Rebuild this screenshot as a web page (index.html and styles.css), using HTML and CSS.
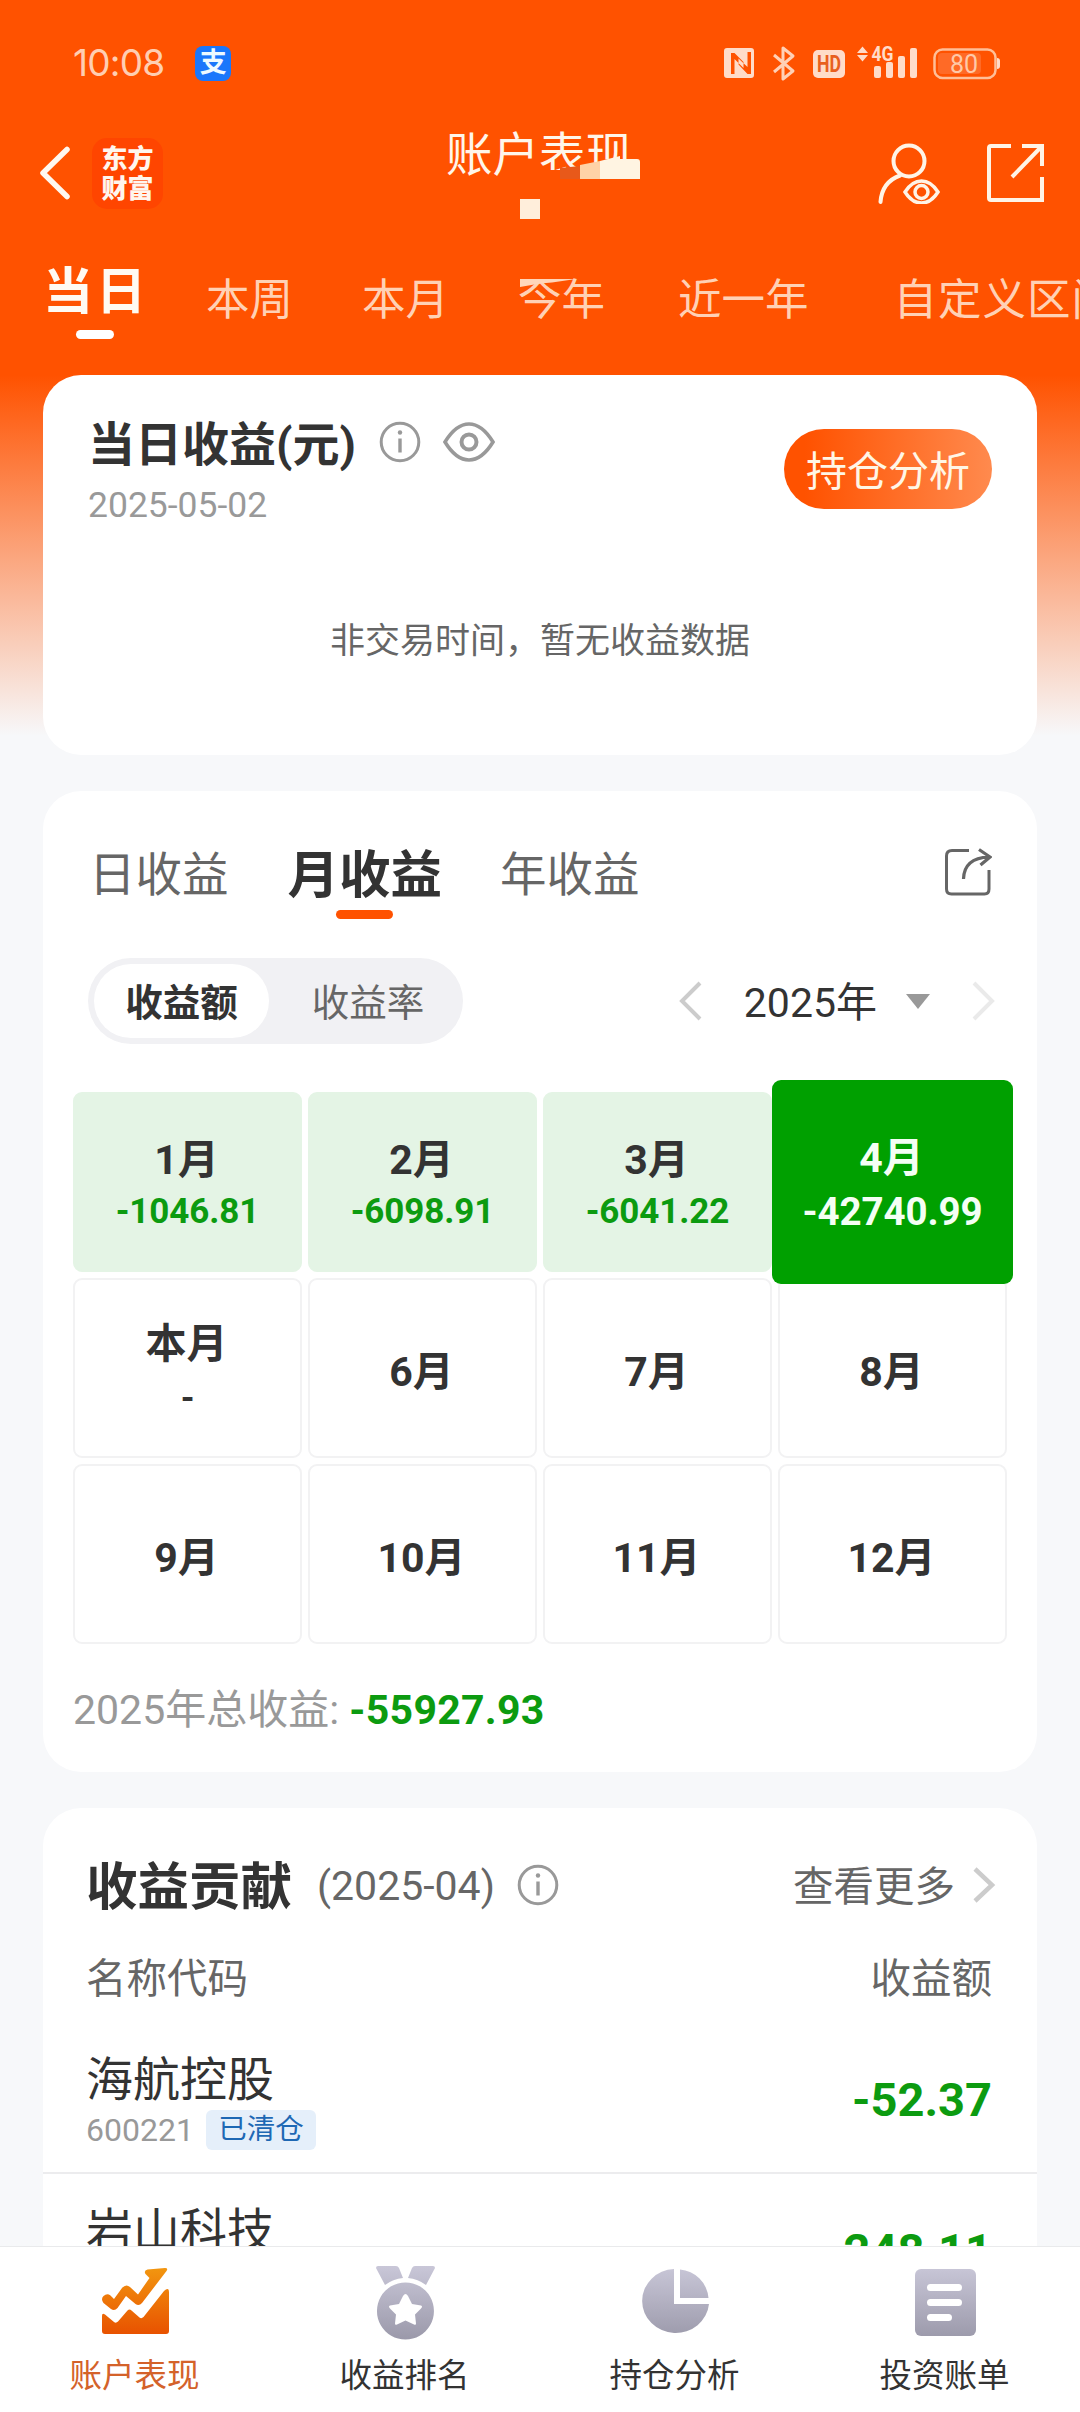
FILE: index.html
```html
<!DOCTYPE html>
<html lang="zh-CN">
<head>
<meta charset="utf-8">
<title>账户表现</title>
<link rel="stylesheet" href="styles.css">
</head>
<body>
<main class="page">
  <div class="status">
    <span class="time">10:08</span>
    <span class="alipay">支</span>
    <svg class="status-icons" width="284" height="40" viewBox="720 42 284 40">
      <g fill="#ffdcc9">
        <path fill-rule="evenodd" d="M727 47h24q3 0 3 3v24q0 3-3 3h-24q-3 0-3-3V50q0-3 3-3zM731 52v21h3.500V58l9 9v-6l-9-9zM747.500 51v15l-9-8.500v6l9 9.500h3.500V51z"/>
        <rect x="813" y="49" width="32" height="28" rx="5"/>
        <path d="M857 52l5.500-6.500L868 52zM857 54h11l-5.500 6.500z"/>
        <rect x="874" y="65" width="7" height="12" rx="2"/>
        <rect x="886" y="61" width="7" height="16" rx="2"/>
        <rect x="898" y="55" width="7" height="22" rx="2"/>
        <rect x="910" y="47" width="7" height="30" rx="2"/>
        <path d="M997 57q3 0 3 3v5q0 3-3 3z"/>
      </g>
      <path d="M774 54l19 16-10 8V47l10 8-19 16" fill="none" stroke="#ffd0b6" stroke-width="3" stroke-linejoin="round"/>
      <rect x="934.500" y="48.500" width="61" height="28.500" rx="8" fill="none" stroke="#ffbf98" stroke-width="2.500"/>
      <rect x="938" y="52" width="43" height="21" rx="4" fill="#ff6a26"/>
      <text x="829" y="71" class="hd" textLength="24" lengthAdjust="spacingAndGlyphs">HD</text>
      <text x="882.500" y="60" class="net" textLength="22" lengthAdjust="spacingAndGlyphs">4G</text>
      <text x="964" y="71.500" class="pct">80</text>
    </svg>
  </div>

  <header class="header">
    <div class="header-left">
      <svg width="30" height="54" viewBox="0 0 30 54"><path d="M27 3.500L3 27l24 23.500" fill="none" stroke="#fff8f0" stroke-width="5.500" stroke-linecap="round" stroke-linejoin="round"/></svg>
      <div class="logo"><span>东方</span><span>财富</span></div>
    </div>
    <h1 class="title">账户表现
      <svg class="pixels" width="200" height="70" viewBox="440 155 200 70">
        <path fill="#ff5200" d="M540 170h20v-2h80v17h-100z"/>
        <path fill="#e8591a" d="M560 168l20-2v13h-20z"/>
        <path fill="#ffd2a6" d="M580 165l20-4v18h-20z"/>
        <path fill="#fff4e2" d="M600 161l20-5v3h17q3 0 3 3v17h-40z"/>
        <path fill="#ffeedb" d="M520 199h20v20h-20z"/>
      </svg>
    </h1>
    <div class="header-right">
      <svg width="64" height="62" viewBox="877 141 64 62" fill="none" stroke="#fff4e6" stroke-width="4" stroke-linecap="round">
        <circle cx="909" cy="160" r="15.500"/>
        <path d="M900 174.500Q882 181 880.500 201"/>
        <path d="M905 191Q912 180 921.500 180T938 191Q931 202 921.500 202T905 191z" stroke-width="3.500"/>
        <circle cx="921.500" cy="191" r="6.500" stroke-width="3.500"/>
      </svg>
      <svg width="58" height="60" viewBox="986 143 58 60" fill="none" stroke="#fff4e6" stroke-width="4">
        <path d="M1011 146h-20q-2 0-2 2v50q0 2 2 2h51v-23"/>
        <path d="M1022 146h20v20M1042 146l-30 31"/>
      </svg>
    </div>
  </header>

  <nav class="ranges">
    <span class="range range-active">当日</span>
    <span class="range range-week">本周</span>
    <span class="range range-month">本月</span>
    <span class="range range-year">今年
      <svg class="notch" width="64" height="18" viewBox="518 269 64 18"><path fill="#ff5200" d="M518 269h44v10h-44z"/><path fill="#ffd6ba" d="M520 279h56l-24 3.500-12 1-20 3.500z"/></svg>
    </span>
    <span class="range range-recent">近一年</span>
    <span class="range range-custom">自定义区间</span>
  </nav>

  <section class="card today">
    <div class="today-head">
      <div>
        <div class="today-title">
          <h2>当日收益(元)</h2>
          <svg class="info" width="42" height="42" viewBox="0 0 42 42"><circle cx="21" cy="21" r="18.800" fill="none" stroke="#999" stroke-width="3"/><circle cx="21" cy="11.500" r="2.200" fill="#999"/><path d="M21 17.500v14" stroke="#999" stroke-width="3.400"/></svg>
          <svg class="eye" width="52" height="40" viewBox="0 0 52 40" fill="none" stroke="#999"><path d="M2 20Q13 2 26 2T50 20Q39 38 26 38T2 20z" stroke-width="3.600"/><circle cx="26" cy="20" r="7.500" stroke-width="4"/></svg>
        </div>
        <div class="today-date">2025-05-02</div>
      </div>
      <a class="analyse">持仓分析</a>
    </div>
    <p class="empty">非交易时间，暂无收益数据</p>
  </section>

  <section class="card calendar">
    <div class="cal-tabs">
      <span class="cal-tab">日收益</span>
      <span class="cal-tab cal-active">月收益</span>
      <span class="cal-tab">年收益</span>
      <svg class="share" width="48" height="48" viewBox="0 0 48 48" fill="none" stroke="#666" stroke-width="3"><path d="M25 2.500H8Q2.500 2.500 2.500 8v33q0 5 5 5h33q4.500 0 4.500-5V22"/><path d="M19.500 31Q20 10 45 9M35 1.500L46 9l-9.500 8" stroke-width="3.200"/></svg>
    </div>
    <div class="cal-tools">
      <div class="segment"><span class="seg seg-on">收益额</span><span class="seg">收益率</span></div>
      <div class="year">
        <svg width="24" height="40" viewBox="0 0 24 40"><path d="M22 2L4 20l18 18" fill="none" stroke="#ccc" stroke-width="4"/></svg>
        <span class="year-text">2025年</span>
        <svg class="drop" width="24" height="15" viewBox="0 0 24 15"><path d="M0 0h24L12 15z" fill="#999"/></svg>
        <svg width="24" height="40" viewBox="0 0 24 40"><path d="M2 2l18 18L2 38" fill="none" stroke="#eaeaea" stroke-width="4"/></svg>
      </div>
    </div>
    <div class="months">
      <div class="month loss"><b>1月</b><i>-1046.81</i></div>
      <div class="month loss"><b>2月</b><i>-6098.91</i></div>
      <div class="month loss"><b>3月</b><i>-6041.22</i></div>
      <div class="month selected"><b>4月</b><i>-42740.99</i></div>
      <div class="month now"><b>本月</b><i>-</i></div>
      <div class="month"><b>6月</b></div>
      <div class="month"><b>7月</b></div>
      <div class="month"><b>8月</b></div>
      <div class="month"><b>9月</b></div>
      <div class="month"><b>10月</b></div>
      <div class="month"><b>11月</b></div>
      <div class="month"><b>12月</b></div>
    </div>
    <p class="total">2025年总收益: <b>-55927.93</b></p>
  </section>

  <section class="card contrib">
    <div class="con-head">
      <h2>收益贡献</h2>
      <span class="con-date">(2025-04)</span>
      <svg class="con-info" width="42" height="42" viewBox="0 0 42 42"><circle cx="21" cy="21" r="18.800" fill="none" stroke="#999" stroke-width="3"/><circle cx="21" cy="11.500" r="2.200" fill="#999"/><path d="M21 17.500v14" stroke="#999" stroke-width="3.400"/></svg>
      <span class="more">查看更多</span>
      <svg class="con-info" width="24" height="36" viewBox="0 0 24 36"><path d="M3 2l17 16L3 34" fill="none" stroke="#ccc" stroke-width="4.500"/></svg>
    </div>
    <div class="con-cols"><span>名称代码</span><span>收益额</span></div>
    <div class="stock">
      <div><div class="name">海航控股</div><div class="code">600221<span class="chip">已清仓</span></div></div>
      <div class="amount">-52.37</div>
    </div>
    <div class="stock">
      <div><div class="name">岩山科技</div></div>
      <div class="amount">-248.11</div>
    </div>
  </section>
</main>

<nav class="bottom">
  <a class="item item-on">
    <svg width="80" height="80" viewBox="95 2260 80 80">
      <defs><linearGradient id="hot" gradientUnits="userSpaceOnUse" x1="0" y1="2268" x2="0" y2="2333"><stop offset="0" stop-color="#f2950f"/><stop offset="1" stop-color="#e85200"/></linearGradient>
      <linearGradient id="cool" gradientUnits="userSpaceOnUse" x1="0" y1="2265" x2="0" y2="2338"><stop offset="0" stop-color="#c9c7d8"/><stop offset="1" stop-color="#9b99aa"/></linearGradient></defs>
      <g fill="url(#hot)">
        <path d="M103.500 2302q-3-4 0-7 3.500-3 7-.500l3.500 3.500 8-11q4-4.500 8-1l8 7.500 11.500-16.500-4-4q-2-3.500 2-4.500l17.500-1.500q3.500 0 1.500 3l-24.500 32q-3 3.500-6.500 1l-9.500-8-8.500 12q-3 3.500-6.500 1z"/>
        <path d="M102 2315q0-3.500 3-1.500l9 7.500q2 1.500 4-.500l9.500-11q2-2 4 0l8 7q2 1.500 4-.500l20.500-26q5-4.500 5 1.500v38.500q0 3-3 3h-61q-3 0-3-3z"/>
      </g>
    </svg><span>账户表现</span></a>
  <a class="item">
    <svg width="80" height="80" viewBox="366 2260 80 80" fill="url(#cool)">
      <path d="M379 2265h18q2 0 3 2l4 10q-10 1-18 7l-9-17q0-2 2-2zM416 2265h18q2 0 2 2l-9 17q-8-6-18-7l4-10q1-2 3-2z"/>
      <path fill-rule="evenodd" d="M406.500 2281.500a28.500 28.500 0 1 1-.1 0zM404 2295l-4 8-9 1.500q-2 1 0 3l6 6-1 9q0 2 2 1l8.500-4 8.500 4q2 1 2-1l-1-9 6-6q2-2 0-3l-9-1.500-4-8q-2.500-4-5 0z"/>
    </svg><span>收益排名</span></a>
  <a class="item">
    <svg width="80" height="80" viewBox="635 2260 80 80" fill="url(#cool)">
      <path d="M674 2268v35h35a33.500 32 0 1 1-35-35zM680 2268.500a31 31 0 0 1 28.500 28.500H680z"/>
    </svg><span>持仓分析</span></a>
  <a class="item">
    <svg width="80" height="80" viewBox="905 2260 80 80" fill="url(#cool)">
      <rect x="915" y="2268" width="61" height="67" rx="6"/>
      <path d="M930.500 2286.500h28M930.500 2301.500h28M930.500 2316.500h18" stroke="#fff" stroke-width="7" stroke-linecap="round"/>
    </svg><span>投资账单</span></a>
</nav>
</body>
</html>
```
FILE: styles.css
```css
* { box-sizing: border-box; margin: 0; padding: 0; }
body {
  width: 1080px; height: 2412px; overflow: hidden;
  display: flex; flex-direction: column;
  font-family: Roboto, "Noto Sans CJK SC", sans-serif; color: #333;
  background: #f6f7fa;
}
svg { display: block; flex: none; }
i { font-style: normal; }
.page {
  flex: 1; min-height: 0; overflow: hidden;
  background: linear-gradient(#ff5200 0, #ff5200 375px, #f7f8fa 736px);
}

.status { height: 126px; padding: 0 76px 0 73px; display: flex; align-items: center; }
.time { font: 400 37px/40px Inter, sans-serif; letter-spacing: -.8px; color: #ffceb2; }
.alipay {
  margin-left: 31px; width: 36px; height: 35px; border-radius: 8px; background: #1a77fb;
  color: #eefaff; font-size: 27px; font-weight: 700; line-height: 35px; text-align: center;
}
.status-icons { margin-left: auto; }
.hd { font: 700 23px Roboto, sans-serif; fill: #e8601f; text-anchor: middle; }
.net { font: 700 21px Roboto, sans-serif; fill: #ffdcc9; text-anchor: middle; }
.pct { font: 400 25px Roboto, sans-serif; fill: #ffc9a8; text-anchor: middle; }

.header {
  height: 94px; padding: 0 36px 0 40px;
  display: grid; grid-template: 94px / 1fr auto 1fr; align-items: center;
}
.header-left { display: flex; align-items: center; gap: 22px; }
.logo {
  width: 71px; height: 71px; border-radius: 15px; background: #ff4500; color: #fff6ee;
  font-weight: 900; font-size: 26px; line-height: 30px;
  display: flex; flex-direction: column; align-items: center; justify-content: center; padding-top: 2px;
}
.title {
  position: relative; font-size: 46.500px; font-weight: 400; line-height: 60px; color: #fff6ea;
  align-self: start; margin: -1px 3px 0 -3px; height: 60px; white-space: nowrap;
}
.pixels { position: absolute; left: -6px; top: 30px; }
.header-right { display: flex; justify-content: flex-end; align-items: center; gap: 45px; }

.ranges { height: 155px; display: flex; padding: 51px 0 0 43px; white-space: nowrap; overflow: hidden; }
.range { flex: none; font-size: 43.500px; line-height: 60px; color: #ffd1b5; }
.range-active {
  width: 104px; margin-top: -9px; font-size: 50px; letter-spacing: 3px; font-weight: 700; color: #fffaf2;
}
.range-active::after {
  content: ""; display: block; width: 38px; height: 9px; border-radius: 5px; background: #fff; margin: 8px 0 0 33px;
}
.range-week { margin-left: 59px; }
.range-month { margin-left: 69px; }
.range-year { margin-left: 69px; position: relative; }
.notch { position: absolute; left: 0; top: -2px; }
.range-recent { margin-left: 73px; }
.range-custom { margin-left: 85px; letter-spacing: 1px; }

.card { margin: 0 43px 36px; background: #fff; border-radius: 38px; }
.today { height: 380px; padding: 40px 45px 0 45px; }
.today-head { display: flex; justify-content: space-between; align-items: flex-start; }
.today-title { display: flex; align-items: center; height: 60px; }
.today-title h2 { font-size: 47px; line-height: 60px; font-weight: 700; }
.info { margin: -6px 0 0 23px; }
.eye { margin: -6px 0 0 22px; }
.today-date { font-size: 35.500px; line-height: 40px; margin-top: 10px; color: #999; }
.analyse {
  margin-top: 14px; width: 208px; height: 80px; border-radius: 40px;
  background: linear-gradient(90deg, #ff5200 10%, #ff8a4e);
  color: #fff6e6; font-size: 41px; line-height: 87px; text-align: center;
}
.empty { font-size: 35px; line-height: 50px; text-align: center; color: #666; margin-top: 92px; }

.calendar { height: 981px; padding: 52px 30px 0; }
.cal-tabs { display: flex; height: 81px; padding: 0 15px; }
.cal-tab { font-size: 46.500px; line-height: 65px; color: #666; }
.cal-tab:first-child { margin-left: 1px; }
.cal-tab + .cal-tab { margin-left: 58px; }
.cal-tab.cal-active { font-size: 51.500px; font-weight: 700; color: #333; margin-left: 59px; }
.cal-active::after {
  content: ""; display: block; width: 57px; height: 9px; border-radius: 5px; background: #ff5200; margin: 2px auto 0;
}
.share { margin: 5px 0 0 auto; }
.cal-tools { display: flex; align-items: center; justify-content: space-between; height: 86px; margin-top: 34px; padding: 0 11px 0 15px; }
.segment { width: 375px; height: 86px; border-radius: 43px; background: #f1f1f4; padding: 6px; display: flex; }
.seg { flex: 1; line-height: 79px; font-size: 37.500px; text-align: center; color: #666; padding-left: 10px; }
.seg-on { flex: none; width: 175px; height: 74px; padding: 0; background: #fff; border-radius: 38px; font-weight: 700; color: #333; }
.year { display: flex; align-items: center; }
.year-text { font-size: 41px; line-height: 60px; margin-left: 42px; padding-top: 3px; }
.drop { margin: 0 42px 0 29px; }
.months {
  display: grid; grid-template-columns: repeat(4, 229px); grid-auto-rows: 180px;
  column-gap: 6px; row-gap: 6px; margin-top: 48px;
}
.month {
  border: 2px solid #f2f2f3; border-radius: 9px; display: flex; flex-direction: column;
  align-items: center; justify-content: center; padding-top: 8px;
}
.month b { font-size: 41px; line-height: 50px; font-weight: 700; padding-right: 2px; }
.month i { font-size: 35px; line-height: 50px; font-weight: 700; color: #0c9b10; padding-top: 2px; letter-spacing: -.1px; }
.loss { background: #e4f4e5; border-color: #e4f4e5; }
.selected { background: #00a000; border: 0; margin: -12px -6px; z-index: 1; color: #f4fff4; padding-top: 6px; }
.month.selected i { font-size: 38.500px; color: #f4fff4; padding-top: 4px; }
.now { padding-top: 4px; }
.month.now i { color: #333; }
.now b { line-height: 56px; }
.total { font-size: 41px; line-height: 60px; color: #999; margin-top: 36px; }
.total b { color: #0c9b10; letter-spacing: .3px; }

.contrib { height: 700px; padding-top: 48px; margin-bottom: 0; }
.con-head { display: flex; align-items: center; height: 60px; padding: 0 41px 0 43px; }
.con-head h2 { font-size: 51.500px; line-height: 60px; padding-top: 3px; }
.con-date { font-size: 41px; color: #666; margin: 0 22px 0 25px; line-height: 60px; }
.con-info { margin-top: -3px; }
.more { margin: 0 17px 0 auto; font-size: 40.500px; line-height: 60px; color: #666; padding-top: 1px; }
.con-cols { display: flex; justify-content: space-between; padding: 0 45px 0 43px; margin-top: 33px; height: 76px; line-height: 60px; font-size: 40.500px; color: #666; }
.stock { height: 149px; padding: 25px 45px 0 43px; display: flex; justify-content: space-between; border-bottom: 2px solid #ececee; }
.stock + .stock { padding-top: 27px; }
.name { font-size: 47px; line-height: 60px; }
.code { display: flex; align-items: center; height: 40px; font-size: 32px; color: #999; }
.chip { margin-left: 12px; width: 110px; height: 40px; border-radius: 6px; background: #e5effa; color: #1e68b4; font-size: 28.500px; line-height: 40px; text-align: center; }
.amount { font-size: 47px; font-weight: 700; line-height: 60px; margin-top: 20px; color: #0c9b10; }

.bottom { height: 166px; flex: none; background: #fff; border-top: 1px solid #e9eaec; display: flex; }
.item { flex: 1; display: flex; flex-direction: column; align-items: center; padding-top: 14px; font-size: 32.500px; line-height: 40px; }
.item span { margin: 15px 1px 0 0; }
.item-on { color: #d4622a; }
```
